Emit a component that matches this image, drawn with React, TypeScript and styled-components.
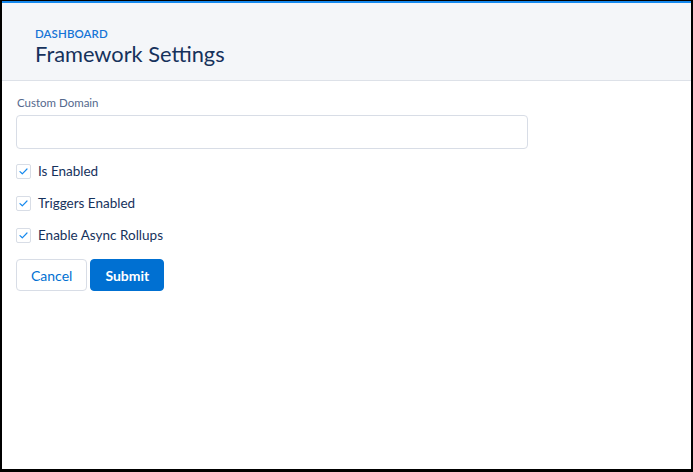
import React from "react";
import styled, { createGlobalStyle } from "styled-components";

const Global = createGlobalStyle`
  html, body { margin: 0; padding: 0; background: #fff; }
  body { font-family: Lato, "Open Sans", "Liberation Sans", sans-serif; }
  * { box-sizing: border-box; }
`;

const Frame = styled.div`
  width: 693px;
  height: 472px;
  border-style: solid;
  border-color: #000;
  border-width: 1px 2px 3px 2px;
  background: #fff;
  display: flex;
  flex-direction: column;
`;

const Header = styled.header`
  background: #f4f6f9;
  border-top: 2px solid #1589ee;
  border-bottom: 1px solid #dde1e8;
  height: 80px;
  padding: 24px 0 0 33px;
  display: flex;
  flex-direction: column;
`;

const Eyebrow = styled.div`
  font-size: 11.5px;
  font-weight: 600;
  letter-spacing: 0.1px;
  color: #1674d6;
  line-height: 14px;
  text-transform: uppercase;
`;

const Title = styled.h1`
  margin: 0;
  font-size: 21.8px;
  font-weight: 400;
  color: #16325c;
  line-height: 26px;
`;

const Body = styled.main`
  padding: 14px 0 0 14px;
  display: flex;
  flex-direction: column;
`;

const Label = styled.label`
  font-size: 11.5px;
  color: #54698d;
  line-height: 16px;
  margin-left: 1px;
  margin-bottom: 4px;
`;

const Input = styled.input`
  width: 512px;
  height: 34px;
  border: 1px solid #d8dde6;
  border-radius: 4px;
  background: #fff;
  font: inherit;
  outline: none;
  margin-bottom: 14px;
`;

const CheckRow = styled.div`
  display: flex;
  align-items: center;
  height: 16px;
  margin-bottom: 16px;
`;

const Box = styled.span`
  width: 15px;
  height: 15px;
  border: 1px solid #d8dde6;
  border-radius: 2px;
  background: #fff;
  display: flex;
  align-items: center;
  justify-content: center;
  margin-right: 7px;
`;

const CheckText = styled.span`
  font-size: 13.5px;
  color: #16325c;
  line-height: 16px;
`;

const Actions = styled.div`
  display: flex;
  gap: 3px;
`;

const Button = styled.button<{ $primary?: boolean }>`
  height: 32px;
  padding: 0 14px;
  border-radius: 4px;
  font-family: inherit;
  font-size: 14px;
  font-weight: ${(p) => (p.$primary ? 700 : 400)};
  border: 1px solid ${(p) => (p.$primary ? "#0070d2" : "#d8dde6")};
  background: ${(p) => (p.$primary ? "#0070d2" : "#fff")};
  color: ${(p) => (p.$primary ? "#fff" : "#0070d2")};
  cursor: pointer;
`;

const Check = () => (
  <svg width="9" height="7" viewBox="0 0 9 7" fill="none">
    <path d="M1 3.6 L3.3 5.8 L8 1" stroke="#1589ee" strokeWidth="1.2" strokeLinecap="round" strokeLinejoin="round" />
  </svg>
);

const items = ["Is Enabled", "Triggers Enabled", "Enable Async Rollups"];

export default function App() {
  return (
    <>
      <Global />
      <Frame>
        <Header>
          <Eyebrow>Dashboard</Eyebrow>
          <Title>Framework Settings</Title>
        </Header>
        <Body>
          <Label>Custom Domain</Label>
          <Input type="text" />
          {items.map((t) => (
            <CheckRow key={t}>
              <Box>
                <Check />
              </Box>
              <CheckText>{t}</CheckText>
            </CheckRow>
          ))}
          <Actions>
            <Button>Cancel</Button>
            <Button $primary>Submit</Button>
          </Actions>
        </Body>
      </Frame>
    </>
  );
}
